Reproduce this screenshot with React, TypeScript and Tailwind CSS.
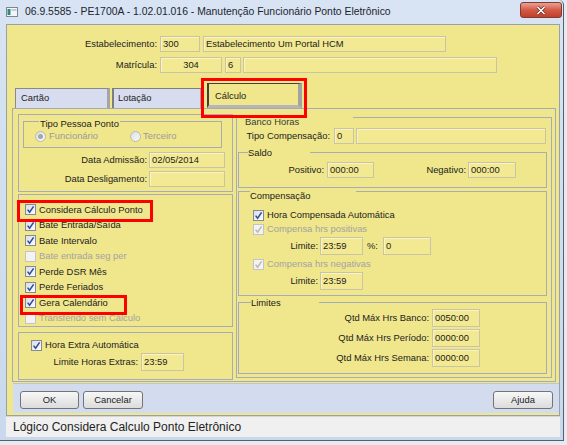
import React from 'react';

type Kids = { children?: React.ReactNode; className?: string };

function Check({ checked = false, disabled = false }: { checked?: boolean; disabled?: boolean }) {
  return (
    <span
      className={`w-[11px] h-[11px] shrink-0 border flex items-center justify-center ${
        disabled
          ? 'border-[#c4c4c4] bg-[#f3f3f3]'
          : 'border-[#858b96] bg-gradient-to-br from-[#d9dee7] to-[#fbfbfb]'
      }`}
    >
      {checked && (
        <svg width="9" height="9" viewBox="0 0 9 9">
          <path
            d="M1.6 4.6 L3.6 7.2 L7.6 1.4"
            stroke={disabled ? '#b8b8b8' : '#2b4a9c'}
            strokeWidth="1.5"
            fill="none"
          />
        </svg>
      )}
    </span>
  );
}

function Radio({ selected = false }: { selected?: boolean }) {
  return (
    <span className="w-[11px] h-[11px] shrink-0 rounded-full border border-[#b8b8b8] bg-gradient-to-br from-[#dedede] to-[#fafafa] flex items-center justify-center">
      {selected && <span className="w-[5px] h-[5px] rounded-full bg-[#a6a6a6]" />}
    </span>
  );
}

function CheckRow({
  label,
  checked,
  disabled,
  className = '',
}: {
  label: string;
  checked?: boolean;
  disabled?: boolean;
  className?: string;
}) {
  return (
    <div className={`flex items-center gap-[3px] ${className}`}>
      <Check checked={checked} disabled={disabled} />
      <span className={disabled ? 'text-[#a3a3a3]' : ''}>{label}</span>
    </div>
  );
}

function Field({ children, className = '' }: Kids) {
  return (
    <div
      className={`border border-[#c9c4a6] bg-[#f2e992] shadow-[inset_1px_1px_0_#fbf4c0] px-[2px] flex items-center whitespace-nowrap overflow-hidden ${className}`}
    >
      {children}
    </div>
  );
}

function Box({ children, className = '' }: Kids) {
  return <div className={`border border-[#a7acb7] flex flex-col ${className}`}>{children}</div>;
}

function Legend({ children, className = '' }: Kids) {
  return <div className={`h-[12px] leading-[12px] bg-[#f0e68c] whitespace-nowrap ${className}`}>{children}</div>;
}

function Button({ children, className = '' }: Kids) {
  return (
    <div
      className={`h-[18px] rounded-[3px] border border-[#747474] bg-gradient-to-b from-[#f7f7f7] to-[#dcdcdc] flex items-center justify-center ${className}`}
    >
      {children}
    </div>
  );
}

const checks = [
  { label: 'Considera Cálculo Ponto', checked: true },
  { label: 'Bate Entrada/Saída', checked: true },
  { label: 'Bate Intervalo', checked: true },
  { label: 'Bate entrada seg per', disabled: true },
  { label: 'Perde DSR Mês', checked: true },
  { label: 'Perde Feriados', checked: true },
  { label: 'Gera Calendário', checked: true },
  { label: 'Transferido sem Cálculo', disabled: true },
];

export default function App() {
  return (
    <div className="relative w-[567px] h-[445px] overflow-hidden bg-[#e6e9ee] font-['Liberation_Sans',Arial,sans-serif] text-[9.4px] text-[#1c1c1c]">
      {/* Window */}
      <div className="w-[564px] h-[441px] flex flex-col bg-gradient-to-b from-[#d8e4f3] to-[#c9d8ec] border-r border-b border-[#56606e] rounded-tr-[5px] pl-[6px] pr-[3px] pb-[3px]">
        {/* Title bar */}
        <div className="h-[24px] -ml-[6px] -mr-[3px] flex items-center shrink-0">
          <svg className="ml-[6px]" width="12" height="10" viewBox="0 0 12 10">
            <rect x="0.5" y="0.5" width="11" height="9" fill="#f3f5f8" stroke="#7b8896" />
            <rect x="1.5" y="2" width="3" height="6" fill="#2f8c78" />
            <rect x="5.5" y="2.5" width="5" height="1" fill="#9aa6b4" />
          </svg>
          <span className="ml-[7px] text-[10.4px] text-[#1d2430] whitespace-nowrap">
            06.9.5585 - PE1700A - 1.02.01.016 - Manutenção Funcionário Ponto Eletrônico
          </span>
          <div className="ml-auto mr-[1px] self-start mt-[2px] w-[42px] h-[16px] rounded-[3px] border border-[#833a30] bg-gradient-to-b from-[#e8a093] via-[#d45a45] to-[#c13f2d] flex items-center justify-center">
            <svg width="10" height="9" viewBox="0 0 10 9">
              <path d="M1.5 1 L8.5 8 M8.5 1 L1.5 8" stroke="#5a1d16" strokeWidth="2.8" />
              <path d="M1.5 1 L8.5 8 M8.5 1 L1.5 8" stroke="#ffffff" strokeWidth="1.7" />
            </svg>
          </div>
        </div>

        {/* Form */}
        <div className="h-[392px] shrink-0 bg-[#f0e68c] border border-[#97a0ad] flex flex-col">
          {/* Header */}
          <div className="mt-[11px] h-[16px] flex items-center">
            <span className="w-[150px] text-right">Estabelecimento:</span>
            <Field className="ml-[3px] w-[40px] h-[16px]">300</Field>
            <Field className="ml-[3px] w-[243px] h-[16px]">Estabelecimento Um Portal HCM</Field>
          </div>
          <div className="mt-[5px] h-[16px] flex items-center">
            <span className="w-[150px] text-right">Matrícula:</span>
            <Field className="ml-[3px] w-[62px] h-[16px] justify-center">304</Field>
            <Field className="ml-[3px] w-[16px] h-[16px]">6</Field>
            <Field className="ml-[2px] w-[254px] h-[16px]" />
          </div>

          {/* Tabs */}
          <div className="mt-[10px] ml-[8px] h-[25px] flex items-end">
            <div className="w-[95px] h-[20px] bg-[#d8dcef] border-l border-t border-[#8a8a8a] border-r-[3px] border-r-[#a5a5a5] pl-[5px] flex items-center">
              Cartão
            </div>
            <div className="ml-[2px] w-[91px] h-[20px] bg-[#d8dcef] border-l-2 border-t border-[#7e7e7e] border-r-[3px] border-r-[#a5a5a5] pl-[4px] flex items-center">
              Lotação
            </div>
            <div className="ml-[4px] w-[95px] h-[25px] bg-[#f0e68c] border-l-2 border-t border-[#404040] border-r-[4px] border-r-[#a2a2a2] border-b-[3px] border-b-[#b6b6b6] pl-[6px] pt-[3px] flex items-center">
              Cálculo
            </div>
          </div>

          {/* Tab page */}
          <div className="ml-[5px] w-[544px] h-[274px] border border-[#a4aab7] flex items-start">
            {/* Left column */}
            <div className="ml-[5px] mt-[5px] w-[215px] flex flex-col">
              <Box className="h-[78px]">
                <Box className="ml-[4px] mt-[6px] w-[199px] h-[27px]">
                  <Legend className="-mt-[4px] ml-[15px] self-start px-[1px]">Tipo Pessoa Ponto</Legend>
                  <div className="h-[12px] pl-[11px] flex items-center text-[#9a9a9a]">
                    <div className="w-[95px] flex items-center gap-[3px]">
                      <Radio selected />
                      <span>Funcionário</span>
                    </div>
                    <div className="flex items-center gap-[2px]">
                      <Radio />
                      <span>Terceiro</span>
                    </div>
                  </div>
                </Box>
                <div className="mt-[4px] h-[16px] flex items-center">
                  <span className="w-[128px] text-right">Data Admissão:</span>
                  <Field className="ml-[2px] w-[76px] h-[16px]">02/05/2014</Field>
                </div>
                <div className="mt-[3px] h-[16px] flex items-center">
                  <span className="w-[128px] text-right">Data Desligamento:</span>
                  <Field className="ml-[2px] w-[76px] h-[16px]" />
                </div>
              </Box>

              <Box className="mt-[2px] h-[133px] pt-[7px] pl-[6px]">
                {checks.map((c) => (
                  <CheckRow key={c.label} className="h-[15.5px]" label={c.label} checked={c.checked} disabled={c.disabled} />
                ))}
              </Box>

              <Box className="mt-[5px] h-[48px] pt-[5px]">
                <CheckRow className="h-[14px] pl-[12px]" label="Hora Extra Automática" checked />
                <div className="mt-[1px] h-[18px] flex items-center">
                  <span className="w-[119px] text-right">Limite Horas Extras:</span>
                  <Field className="ml-[3px] w-[43px] h-[18px]">23:59</Field>
                </div>
              </Box>
            </div>

            {/* Right column */}
            <Box className="ml-[3px] mt-[8px] w-[316px] h-[261px]">
              <Legend className="-mt-[2px] ml-[8px] w-[108px] text-[#3a3a3a]">Banco Horas</Legend>
              <div className="h-[16px] flex items-center">
                <span className="ml-[8px] w-[85px] text-right">Tipo Compensação:</span>
                <Field className="ml-[4px] w-[20px] h-[16px]">0</Field>
                <Field className="ml-[2px] w-[190px] h-[16px]" />
              </div>

              <Box className="mt-[8px] ml-[1px] w-[309px] h-[36px]">
                <Legend className="-mt-[6px] ml-[9px] w-[62px]">Saldo</Legend>
                <div className="mt-[3px] h-[16px] flex items-center">
                  <span className="w-[85px] text-right">Positivo:</span>
                  <Field className="ml-[3px] w-[47px] h-[16px]">000:00</Field>
                  <span className="w-[92px] text-right">Negativo:</span>
                  <Field className="ml-[2px] w-[48px] h-[16px]">000:00</Field>
                </div>
              </Box>

              <Box className="mt-[3px] ml-[1px] w-[309px] h-[105px]">
                <Legend className="-mt-[2px] ml-[11px] w-[106px]">Compensação</Legend>
                <CheckRow className="mt-[6px] h-[14px] pl-[14px]" label="Hora Compensada Automática" checked />
                <CheckRow className="h-[14px] pl-[14px]" label="Compensa hrs positivas" checked disabled />
                <div className="mt-[1px] h-[18px] flex items-center">
                  <span className="w-[79px] text-right">Limite:</span>
                  <Field className="ml-[2px] w-[43px] h-[18px]">23:59</Field>
                  <span className="ml-[4px] w-[13px]">%:</span>
                  <Field className="ml-[3px] w-[48px] h-[18px]">0</Field>
                </div>
                <CheckRow className="mt-[2px] h-[14px] pl-[14px]" label="Compensa hrs negativas" checked disabled />
                <div className="mt-[1px] h-[18px] flex items-center">
                  <span className="w-[79px] text-right">Limite:</span>
                  <Field className="ml-[2px] w-[43px] h-[18px]">23:59</Field>
                </div>
              </Box>

              <Box className="mt-[6px] ml-[1px] w-[309px] h-[72px]">
                <Legend className="-mt-[6px] ml-[12px] w-[68px]">Limites</Legend>
                {[
                  ['Qtd Máx Hrs Banco:', '0050:00'],
                  ['Qtd Máx Hrs Período:', '0000:00'],
                  ['Qtd Máx Hrs Semana:', '0000:00'],
                ].map(([label, value], i) => (
                  <div key={label} className={`h-[18px] flex items-center ${i > 0 ? 'mt-[2px]' : ''}`}>
                    <span className="w-[190px] text-right">{label}</span>
                    <Field className="ml-[3px] w-[48px] h-[18px]">{value}</Field>
                  </div>
                ))}
              </Box>
            </Box>
          </div>

          {/* Buttons */}
          <div className="mt-[1px] ml-[6px] h-[30px] bg-[#d3dcee] border-t border-[#bcc5d8] flex items-start pt-[7px] pl-[7px] pr-[6px]">
            <Button className="w-[59px]">OK</Button>
            <Button className="ml-[4px] w-[60px]">Cancelar</Button>
            <Button className="ml-auto w-[60px]">Ajuda</Button>
          </div>
        </div>

        {/* Status bar */}
        <div className="h-[21px] shrink-0 bg-[#f0f0f0] border-t border-[#d6d6d6] pl-[7px] flex items-center text-[12px] text-[#222]">
          Lógico Considera Calculo Ponto Eletrônico
        </div>
      </div>

      {/* Red annotations */}
      <div className="absolute left-[201px] top-[78px] w-[106px] h-[40px] border-[3px] border-[#ff0000]" />
      <div className="absolute left-[17px] top-[200px] w-[136px] h-[22px] border-[3px] border-[#ff0000]" />
      <div className="absolute left-[20px] top-[295px] w-[107px] h-[20px] border-[3px] border-[#ff0000]" />
    </div>
  );
}
